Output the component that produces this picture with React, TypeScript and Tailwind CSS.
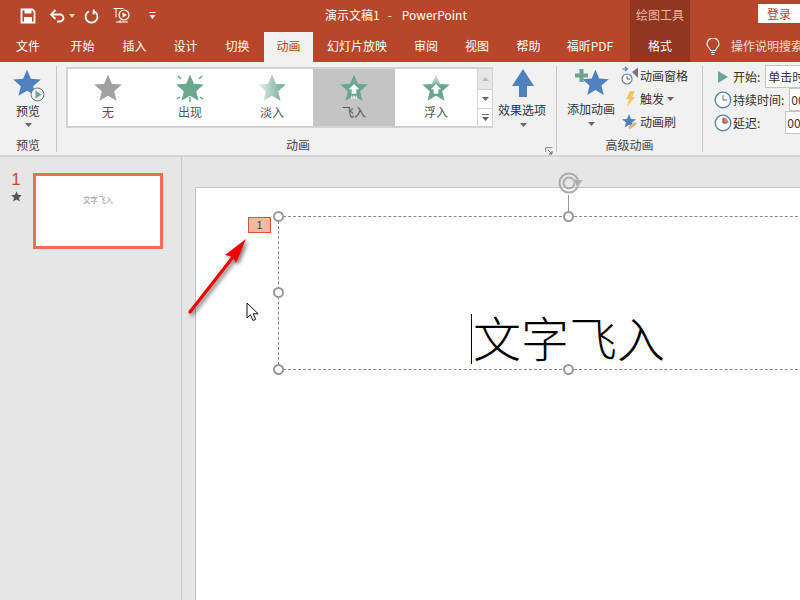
import React from "react";

const F = { fontFamily: '"Noto Sans CJK SC", "Liberation Sans", sans-serif' };
const PTS = "12,0.5 15.3,8.4 23.8,9.1 17.3,14.7 19.3,23 12,18.6 4.7,23 6.7,14.7 0.2,9.1 8.7,8.4";

function Star({ size, fill, className = "" }: { size: number; fill: string; className?: string }) {
  return (
    <svg width={size} height={size} viewBox="0 0 24 24" className={className}>
      <polygon points={PTS} fill={fill} />
    </svg>
  );
}

function Caret({ className = "" }: { className?: string }) {
  return (
    <svg width="7" height="4" viewBox="0 0 7 4" className={`shrink-0 ${className}`}>
      <polygon points="0,0 7,0 3.5,4" fill="#666" />
    </svg>
  );
}

function TitleIcons() {
  return (
    <div className="flex items-center h-full">
      <svg width="16" height="16" viewBox="0 0 16 16" className="ml-[20px]">
        <path d="M1.5 1.5h11l2 2v11h-13z" fill="none" stroke="#fff" strokeWidth="1.8" />
        <rect x="4.5" y="1.5" width="7" height="4" fill="#fff" />
        <rect x="4" y="9" width="8" height="5.5" fill="#fff" />
      </svg>
      <svg width="16" height="14" viewBox="0 0 16 14" className="ml-[14px]">
        <path d="M2 5.5h8a3.500 3.500 0 0 1 0 7H7" fill="none" stroke="#fff" strokeWidth="1.8" />
        <path d="M5.500 1 1 5.500 5.500 10" fill="none" stroke="#fff" strokeWidth="1.8" />
      </svg>
      <svg width="6" height="4" viewBox="0 0 6 4" className="ml-[3px]">
        <polygon points="0,0 6,0 3,4" fill="#f5d5ca" />
      </svg>
      <svg width="15" height="15" viewBox="0 0 15 15" className="ml-[9px]">
        <path d="M5 2.200a6 6 0 1 0 5 0" fill="none" stroke="#fff" strokeWidth="1.8" />
        <path d="M10.500 0.500v5h-1.800v-5z" fill="#fff" />
      </svg>
      <svg width="18" height="20" viewBox="0 0 18 20" className="ml-[14px]">
        <path d="M0.500 2.500h10M3 2.500v9" fill="none" stroke="#fff" strokeWidth="1" />
        <circle cx="11" cy="9" r="5" fill="none" stroke="#fff" strokeWidth="1.2" />
        <polygon points="9.500,6.500 14,9 9.500,11.500" fill="#fff" />
        <path d="M3 16h12M7 14v3" fill="none" stroke="#fff" strokeWidth="1" />
      </svg>
      <svg width="7" height="8" viewBox="0 0 7 8" className="ml-[18px]">
        <rect x="0.500" y="0" width="6" height="1" fill="#fff" />
        <polygon points="0.500,3 6.500,3 3.500,7" fill="#fff" />
      </svg>
    </div>
  );
}

const TABS: [string, number][] = [
  ["文件", 56], ["开始", 53], ["插入", 51], ["设计", 51], ["切换", 53],
];
const TABS2: [string, number][] = [
  ["幻灯片放映", 88], ["审阅", 50], ["视图", 52], ["帮助", 51], ["福昕PDF", 72],
];

function GalleryItem({ label, selected, icon, className = "" }: { label: string; selected?: boolean; icon: React.ReactNode; className?: string }) {
  return (
    <div className={`w-[82px] h-[57px] shrink-0 flex flex-col items-center pt-[5px] ${selected ? "bg-[#c4c4c4]" : ""} ${className}`}>
      <div className="h-[28px] w-[28px] relative">{icon}</div>
      <div className="text-[12px] leading-[16px] text-[#555] mt-[2px]">{label}</div>
    </div>
  );
}

function UpArrow({ bottom }: { bottom?: boolean }) {
  return (
    <svg width="28" height="28" viewBox="0 0 24 24" className="absolute left-0 top-0">
      <polygon points="12,8.500 16.500,13 14,13 14,17 10,17 10,13 7.500,13" fill="#fff" />
      {bottom && <path d="M10 18.500v3M12 18.500v3M14 18.500v3" stroke="#fff" strokeWidth="1" opacity="0.7" />}
    </svg>
  );
}

function Gallery() {
  return (
    <div className="ml-[9px] mt-[5px] h-[61px] w-[427px] border-2 border-[#d2d2d2] bg-white flex shrink-0 box-border">
      <GalleryItem className="-ml-[1px]" label="无" icon={<Star size={28} fill="#a0a0a0" />} />
      <GalleryItem
        label="出现"
        icon={
          <>
            <Star size={28} fill="#6aa690" />
            <svg width="28" height="28" viewBox="0 0 28 28" className="absolute left-0 top-0">
              <path d="M2 2l3 3M26 2l-3 3M1 25l3-2M27 25l-3-2M14 23v5" stroke="#6aa690" strokeWidth="1.500" />
            </svg>
          </>
        }
      />
      <GalleryItem
        label="淡入"
        icon={
          <svg width="28" height="28" viewBox="0 0 24 24">
            <defs>
              <linearGradient id="fade" x1="0" x2="1" y1="0" y2="0">
                <stop offset="0" stopColor="#e4f0ec" />
                <stop offset="1" stopColor="#6aa690" />
              </linearGradient>
            </defs>
            <polygon points={PTS} fill="url(#fade)" />
          </svg>
        }
      />
      <GalleryItem label="飞入" selected icon={<><Star size={28} fill="#6aa690" /><UpArrow bottom /></>} />
      <GalleryItem
        label="浮入"
        icon={
          <>
            <svg width="28" height="28" viewBox="0 0 24 24">
              <defs>
                <linearGradient id="rise" x1="0" x2="0" y1="0" y2="1">
                  <stop offset="0" stopColor="#e4f0ec" />
                  <stop offset="0.450" stopColor="#6aa690" />
                </linearGradient>
              </defs>
              <polygon points={PTS} fill="url(#rise)" />
            </svg>
            <UpArrow />
          </>
        }
      />
      <div className="flex-1" />
      <div className="w-[15px] -mr-[1px] flex flex-col border-l border-[#d2d2d2] shrink-0">
        <div className="h-[21px] bg-[#e6e6e6] flex items-center justify-center border-b border-[#d2d2d2]">
          <svg width="7" height="4" viewBox="0 0 7 4"><polygon points="0,4 7,4 3.500,0" fill="#bbb" /></svg>
        </div>
        <div className="h-[19px] bg-white flex items-center justify-center border-b border-[#d2d2d2]">
          <Caret />
        </div>
        <div className="flex-1 bg-white flex flex-col items-center justify-center gap-[2px]">
          <div className="w-[7px] h-[1px] bg-[#666]" />
          <Caret />
        </div>
      </div>
    </div>
  );
}

function Sep() {
  return <div className="w-[1px] h-[86px] mt-[4px] bg-[#c6c6c6] shrink-0" />;
}

function GroupLabel({ children, className = "" }: { children: React.ReactNode; className?: string }) {
  return <div className={`text-[12px] leading-[16px] text-[#444] text-center ${className}`}>{children}</div>;
}

function Ribbon() {
  return (
    <div className="h-[95px] bg-[#f1f1f1] border-b-2 border-[#d4d4d4] flex text-[#444] overflow-hidden box-border">
      {/* 预览 */}
      <div className="w-[56px] shrink-0 flex flex-col items-center pt-[7px]">
        <div className="relative w-[32px] h-[36px]">
          <Star size={28} fill="#4f81bd" className="absolute left-[1px] top-0" />
          <svg width="15" height="15" viewBox="0 0 15 15" className="absolute left-[18px] top-[18px]">
            <circle cx="7.500" cy="7.500" r="6.500" fill="#f1f1f1" stroke="#777" strokeWidth="1" />
            <polygon points="5.500,3.500 11.500,7.500 5.500,11.500" fill="#6aa690" />
          </svg>
        </div>
        <div className="text-[12px] leading-[16px] -mt-[2px] text-[#333]">预览</div>
        <Caret className="mt-[4px]" />
        <GroupLabel className="mt-[10px]">预览</GroupLabel>
      </div>
      <Sep />
      {/* 动画 */}
      <div className="w-[499px] shrink-0 flex flex-col relative">
        <div className="flex h-[66px]">
          <Gallery />
          <div className="-ml-[1px] w-[60px] flex flex-col items-center pt-[7px]">
            <svg width="22" height="28" viewBox="0 0 22 28" className="shrink-0 ml-[1px]">
              <polygon points="11,0 22,17 15,17 15,28 7,28 7,17 0,17" fill="#4f81bd" />
            </svg>
            <div className="text-[12px] leading-[16px] whitespace-nowrap text-[#333] mt-[5px]">效果选项</div>
            <Caret className="mt-[5px] ml-[2px]" />
          </div>
        </div>
        <GroupLabel className="mt-[9px] w-[482px]">动画</GroupLabel>
        <svg width="8" height="8" viewBox="0 0 8 8" className="absolute left-[488px] top-[85px]">
          <path d="M0.500 5V0.500H7.500" stroke="#999" fill="none" />
          <path d="M3 3l4 4M7 4v3H4" stroke="#666" fill="none" />
        </svg>
      </div>
      <Sep />
      {/* 高级动画 */}
      <div className="w-[145px] shrink-0 flex flex-col">
        <div className="flex">
          <div className="w-[68px] -mr-[4px] flex flex-col items-center pt-[7px] shrink-0">
            <div className="relative w-[40px] h-[32px]">
              <Star size={27} fill="#4f81bd" className="absolute left-[11px] top-0" />
              <svg width="13" height="13" viewBox="0 0 13 13" className="absolute left-[4px] top-0">
                <path d="M4.500 0h4v4.500H13v4H8.500V13h-4V8.500H0v-4h4.500z" fill="#6aa690" />
              </svg>
            </div>
            <div className="text-[12px] leading-[16px] whitespace-nowrap text-[#333]">添加动画</div>
            <Caret className="mt-[5px]" />
          </div>
          <div className="flex flex-col text-[12px] leading-[23px] text-[#333] whitespace-nowrap pt-[2px]">
            <div className="flex items-center h-[23px]">
              <svg width="18" height="20" viewBox="0 0 18 20" className="shrink-0">
                <path d="M1 3h5M4 1l2.500 2L4 5" stroke="#4f81bd" strokeWidth="1.2" fill="none" />
                <circle cx="6" cy="13" r="5" fill="#fff" stroke="#4f81bd" strokeWidth="1.2" />
                <path d="M6 10v3h3" stroke="#555" fill="none" />
                <polygon points="11,6 17,1.500 17,12" fill="#777" />
              </svg>
              <span className="ml-[1px]">动画窗格</span>
            </div>
            <div className="flex items-center h-[23px]">
              <svg width="12" height="16" viewBox="0 0 12 16" className="ml-[3px] shrink-0">
                <polygon points="6,0 11,0 8,6 11,6 3,16 5,8 2,8" fill="#f5c26b" />
              </svg>
              <span className="ml-[4px]">触发</span>
              <Caret className="ml-[3px]" />
            </div>
            <div className="flex items-center h-[23px]">
              <svg width="18" height="18" viewBox="0 0 18 18" className="shrink-0">
                <polygon points="8,1 10,6 15,6.300 11,9.500 12.300,14.500 8,11.700 3.700,14.500 5,9.500 1,6.300 6,6" fill="#4f81bd" />
                <path d="M8 15l7-5" stroke="#d8b878" strokeWidth="3" />
              </svg>
              <span className="ml-[1px]">动画刷</span>
            </div>
          </div>
        </div>
        <GroupLabel className="mt-[4px]">高级动画</GroupLabel>
      </div>
      <Sep />
      {/* 计时 */}
      <div className="flex-1 min-w-0 flex flex-col text-[12px] text-[#333] whitespace-nowrap pl-[11px] overflow-hidden">
        <div className="flex items-center h-[23px] mt-[3px]">
          <svg width="10" height="12" viewBox="0 0 10 12" className="ml-[4px] shrink-0">
            <polygon points="0,0 10,6 0,12" fill="#6aa690" />
          </svg>
          <span className="ml-[5px] shrink-0">开始:</span>
          <div className="ml-[5px] h-[23px] w-[60px] bg-white border border-[#c6c6c6] pl-[2px] leading-[21px] shrink-0">单击时</div>
        </div>
        <div className="flex items-center h-[23px]">
          <svg width="18" height="18" viewBox="0 0 18 18" className="shrink-0">
            <circle cx="9" cy="9" r="7.800" fill="#fff" stroke="#4f81bd" strokeWidth="1.3" />
            <path d="M9 4v5h4" stroke="#666" fill="none" />
          </svg>
          <span className="ml-[1px] shrink-0">持续时间:</span>
          <div className="ml-[5px] h-[23px] w-[40px] bg-white border border-[#c6c6c6] pl-[1px] leading-[21px] shrink-0">00</div>
        </div>
        <div className="flex items-center h-[23px]">
          <svg width="18" height="18" viewBox="0 0 18 18" className="shrink-0">
            <circle cx="9" cy="9" r="7.800" fill="#fff" stroke="#4f81bd" strokeWidth="1.3" />
            <path d="M9 9V3.500A5.500 5.500 0 0 1 14.500 9z" fill="#e07a5f" />
            <path d="M9 4v5h4" stroke="#555" fill="none" />
          </svg>
          <span className="ml-[1px] shrink-0">延迟:</span>
          <div className="ml-[25px] h-[23px] w-[40px] bg-white border border-[#c6c6c6] pl-[1px] leading-[21px] shrink-0">00</div>
        </div>
      </div>
    </div>
  );
}

function Handle({ className }: { className: string }) {
  return <div className={`absolute w-[11px] h-[11px] rounded-full bg-white border-2 border-[#999] box-border ${className}`} />;
}

function Workspace() {
  return (
    <div className="flex h-[443px] bg-[#e6e6e6] overflow-hidden">
      <div className="w-[182px] shrink-0 border-r border-[#c6c6c6] flex pt-[14px] box-border">
        <div className="w-[33px] flex flex-col items-center shrink-0">
          <div className="text-[17px] leading-[18px] text-[#d24726] -ml-[1px]" style={{ fontFamily: '"Liberation Sans", sans-serif' }}>1</div>
          <svg width="11" height="11" viewBox="0 0 24 24" className="mt-[2px] -ml-[1px]">
            <polygon points={PTS} fill="#555" />
          </svg>
        </div>
        <div className="w-[130px] h-[76px] mt-[2px] border-[3px] border-[#ef6f50] bg-white flex justify-center pt-[19px] box-border">
          <span className="text-[7.5px] leading-[10px] text-[#aaa] font-medium whitespace-nowrap">文字飞入</span>
        </div>
      </div>
      <div className="flex-1 pl-[13px] pt-[30px] relative">
        <svg width="28" height="24" viewBox="0 0 28 24" className="absolute left-[374px] top-[13px] z-10">
          <circle cx="13" cy="13" r="9.500" fill="none" stroke="#aaa" strokeWidth="2" />
          <circle cx="13" cy="13" r="5.500" fill="none" stroke="#aaa" strokeWidth="2" />
          <polygon points="17,9 27,10 21,17" fill="#aaa" stroke="#e6e6e6" strokeWidth="0.500" />
        </svg>
        <div className="bg-white border-l border-t border-[#c6c6c6] w-[800px] h-[600px] pl-[82px] pt-[28px] relative">
          <div className="absolute left-[372px] top-[7px] w-[1px] h-[23px] bg-[#999]" />
          <div className="w-[560px] h-[154px] border border-dashed border-[#888] relative flex items-end justify-start">
            <div className="ml-[192px] mb-[3px] flex items-center">
              <div className="w-[1px] h-[50px] bg-black mr-[1px]" />
              <span className="text-[48px] leading-[54px] text-black font-extralight whitespace-nowrap -translate-y-[3px]">文字飞入</span>
            </div>
            <Handle className="left-[-6px] top-[-6px]" />
            <Handle className="left-[284px] top-[-6px]" />
            <Handle className="left-[-6px] top-[70px]" />
            <Handle className="left-[-6px] top-[147px]" />
            <Handle className="left-[284px] top-[147px]" />
          </div>
          <div className="absolute left-[52px] top-[29px] w-[23px] h-[16px] bg-[#f4b9a0] border border-[#d9553a] text-[11px] leading-[14px] text-center text-[#444]" style={{ fontFamily: '"Liberation Sans", sans-serif' }}>1</div>
          <svg width="80" height="90" viewBox="0 0 80 90" className="absolute left-[-10px] top-[45px]">
            <defs>
              <filter id="sh" x="-30%" y="-30%" width="170%" height="170%">
                <feDropShadow dx="2" dy="2" stdDeviation="2" floodColor="#000" floodOpacity="0.6" />
              </filter>
            </defs>
            <g filter="url(#sh)">
              <path d="M4 79 L47 24" stroke="#f00000" strokeWidth="3.2" strokeLinecap="round" />
              <polygon points="60,6 39,22 47,24 50,30" fill="#f00000" />
            </g>
          </svg>
          <svg width="14" height="20" viewBox="0 0 14 20" className="absolute left-[50px] top-[114px]">
            <path d="M1 1v15l3.500-3.200 2.600 5.700 2.600-1.200-2.600-5.500h5z" fill="#fff" stroke="#111" strokeWidth="1" />
          </svg>
        </div>
      </div>
    </div>
  );
}

export default function App() {
  return (
    <div className="w-[800px] h-[600px] overflow-hidden bg-white" style={F}>
      <div className="h-[62px] bg-[#b7472a]">
        <div className="h-[32px] flex">
          <div className="w-[300px] shrink-0"><TitleIcons /></div>
          <div className="w-[330px] shrink-0 text-[12px] leading-[30px] text-white whitespace-nowrap pl-[25px] flex">
            <span>演示文稿1</span>
            <span className="ml-[8px]">-</span>
            <span className="ml-[10px]">PowerPoint</span>
          </div>
          <div className="w-[60px] shrink-0 bg-[#91361f] text-[12px] leading-[30px] text-center text-[#f0b49e]">绘图工具</div>
          <div className="flex-1 flex justify-end pt-[4px]">
            <div className="w-[42px] h-[19px] bg-white text-[12px] leading-[19px] text-center text-[#b7472a]">登录</div>
          </div>
        </div>
        <div className="h-[30px] flex text-[12px] text-white leading-[28px] whitespace-nowrap">
          {TABS.map(([t, w]) => (
            <div key={t} className="text-center shrink-0" style={{ width: w }}>{t}</div>
          ))}
          <div className="w-[49px] shrink-0 bg-[#f1f1f1] text-[#b7472a] text-center">动画</div>
          {TABS2.map(([t, w]) => (
            <div key={t} className="text-center shrink-0" style={{ width: w }}>{t}</div>
          ))}
          <div className="w-[60px] shrink-0 ml-[4px] bg-[#91361f] text-center">格式</div>
          <svg width="14" height="18" viewBox="0 0 14 18" className="ml-[16px] mt-[6px] shrink-0">
            <path d="M4.500 12.500C4 10 1 9 1 6a6 6 0 0 1 12 0c0 3-3 4-3.500 6.500z" fill="none" stroke="#fff" strokeWidth="1.1" />
            <path d="M5 14.500h4M5.500 16.500h3" stroke="#fff" strokeWidth="1.1" />
          </svg>
          <div className="ml-[11px] text-[#f3dcd4]">操作说明搜索</div>
        </div>
      </div>
      <Ribbon />
      <Workspace />
    </div>
  );
}
